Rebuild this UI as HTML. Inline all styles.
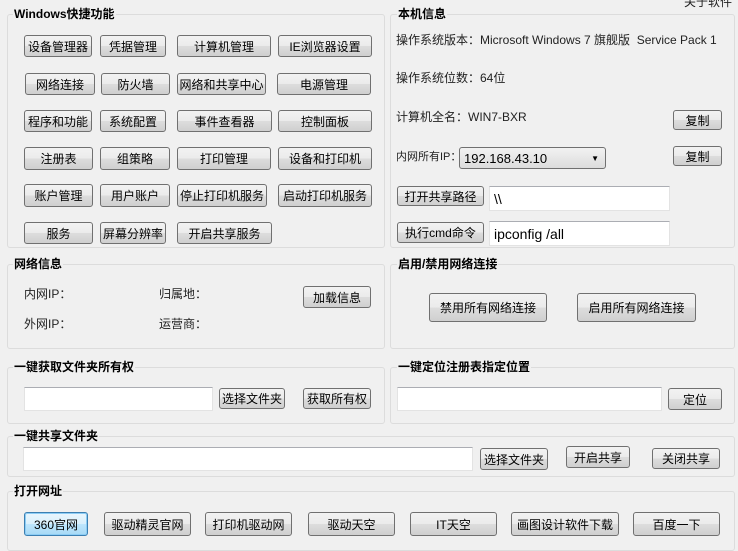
<!DOCTYPE html>
<html><head><meta charset="utf-8"><style>
*{box-sizing:border-box;margin:0;padding:0}
body{width:738px;height:547px;background:#f0f0f0;position:relative;overflow:hidden;font-family:"Liberation Sans","Noto Sans CJK SC",sans-serif;font-size:12px;color:#000}
.g{position:absolute;border:1px solid #dcdcdc;border-radius:3px;background:#f0f0f0}
.t{position:absolute;font-weight:bold;font-size:12px;background:#f0f0f0;padding:0 1px;line-height:14px}
.b{position:absolute;border:1px solid #707070;border-radius:3px;background:linear-gradient(#f2f2f2 0%,#ebebeb 50%,#dddddd 51%,#cfcfcf 100%);text-align:center;font-size:12px;display:flex;align-items:center;justify-content:center;white-space:nowrap}
.f{border-color:#3c7fb1;background:linear-gradient(#eaf6fd 0%,#d9f0fc 50%,#bee6fd 51%,#a7d9f5 100%);box-shadow:inset 0 0 0 1px #8ccdf5}
.i{position:absolute;background:#fff;border:1px solid #e3e3e3;border-top-color:#abadb3;font-size:14px;padding-left:4px;display:flex;align-items:center}
.l{position:absolute;font-size:12px;line-height:14px;white-space:nowrap;color:#222}
</style></head><body>
<div class="l" style="left:684px;top:-5px">关于软件</div>

<div class="g" style="left:7px;top:14px;width:378px;height:234px"></div>
<div class="t" style="left:13px;top:7px">Windows快捷功能</div>
<div class="b" style="left:24px;top:35px;width:68px;height:22px">设备管理器</div>
<div class="b" style="left:100px;top:35px;width:66px;height:22px">凭据管理</div>
<div class="b" style="left:177px;top:35px;width:94px;height:22px">计算机管理</div>
<div class="b" style="left:278px;top:35px;width:94px;height:22px">IE浏览器设置</div>
<div class="b" style="left:25px;top:73px;width:70px;height:22px">网络连接</div>
<div class="b" style="left:101px;top:73px;width:69px;height:22px">防火墙</div>
<div class="b" style="left:177px;top:73px;width:89px;height:22px">网络和共享中心</div>
<div class="b" style="left:277px;top:73px;width:94px;height:22px">电源管理</div>
<div class="b" style="left:24px;top:110px;width:68px;height:22px">程序和功能</div>
<div class="b" style="left:100px;top:110px;width:66px;height:22px">系统配置</div>
<div class="b" style="left:177px;top:110px;width:95px;height:22px">事件查看器</div>
<div class="b" style="left:278px;top:110px;width:94px;height:22px">控制面板</div>
<div class="b" style="left:24px;top:147px;width:69px;height:23px">注册表</div>
<div class="b" style="left:100px;top:147px;width:70px;height:23px">组策略</div>
<div class="b" style="left:177px;top:147px;width:94px;height:23px">打印管理</div>
<div class="b" style="left:278px;top:147px;width:94px;height:23px">设备和打印机</div>
<div class="b" style="left:24px;top:184px;width:69px;height:23px">账户管理</div>
<div class="b" style="left:100px;top:184px;width:70px;height:23px">用户账户</div>
<div class="b" style="left:177px;top:184px;width:90px;height:23px">停止打印机服务</div>
<div class="b" style="left:278px;top:184px;width:94px;height:23px">启动打印机服务</div>
<div class="b" style="left:24px;top:222px;width:69px;height:22px">服务</div>
<div class="b" style="left:100px;top:222px;width:66px;height:22px">屏幕分辨率</div>
<div class="b" style="left:177px;top:222px;width:95px;height:22px">开启共享服务</div>

<div class="g" style="left:390px;top:14px;width:345px;height:234px"></div>
<div class="t" style="left:397px;top:7px">本机信息</div>
<div class="l" style="left:396px;top:33px">操作系统版本：Microsoft Windows 7 旗舰版&nbsp; Service Pack 1</div>
<div class="l" style="left:396px;top:71px">操作系统位数：64位</div>
<div class="l" style="left:396px;top:110px">计算机全名：WIN7-BXR</div>
<div class="b" style="left:673px;top:110px;width:49px;height:20px">复制</div>
<div class="l" style="left:396px;top:150px;font-size:11px">内网所有IP：</div>
<div class="b" style="left:459px;top:147px;width:147px;height:22px;justify-content:space-between;padding:0 6px 0 4px;font-size:13px;background:linear-gradient(#f2f2f2,#dcdcdc)"><span>192.168.43.10</span><span style="font-size:8px">▼</span></div>
<div class="b" style="left:673px;top:146px;width:49px;height:20px">复制</div>
<div class="b" style="left:397px;top:186px;width:87px;height:20px">打开共享路径</div>
<div class="i" style="left:489px;top:186px;width:181px;height:25px">\\</div>
<div class="b" style="left:397px;top:222px;width:87px;height:21px">执行cmd命令</div>
<div class="i" style="left:489px;top:221px;width:181px;height:25px">ipconfig /all</div>

<div class="g" style="left:7px;top:264px;width:378px;height:85px"></div>
<div class="t" style="left:13px;top:257px">网络信息</div>
<div class="l" style="left:24px;top:287px">内网IP：</div>
<div class="l" style="left:159px;top:287px">归属地：</div>
<div class="b" style="left:303px;top:286px;width:68px;height:22px">加载信息</div>
<div class="l" style="left:24px;top:317px">外网IP：</div>
<div class="l" style="left:159px;top:317px">运营商：</div>

<div class="g" style="left:390px;top:264px;width:345px;height:85px"></div>
<div class="t" style="left:397px;top:257px">启用/禁用网络连接</div>
<div class="b" style="left:429px;top:293px;width:118px;height:29px">禁用所有网络连接</div>
<div class="b" style="left:577px;top:293px;width:119px;height:29px">启用所有网络连接</div>

<div class="g" style="left:7px;top:367px;width:378px;height:57px"></div>
<div class="t" style="left:13px;top:360px">一键获取文件夹所有权</div>
<div class="i" style="left:24px;top:387px;width:189px;height:24px"></div>
<div class="b" style="left:219px;top:388px;width:66px;height:21px">选择文件夹</div>
<div class="b" style="left:303px;top:388px;width:68px;height:21px">获取所有权</div>

<div class="g" style="left:390px;top:367px;width:345px;height:57px"></div>
<div class="t" style="left:397px;top:360px">一键定位注册表指定位置</div>
<div class="i" style="left:397px;top:387px;width:265px;height:24px"></div>
<div class="b" style="left:668px;top:388px;width:54px;height:22px">定位</div>

<div class="g" style="left:7px;top:436px;width:728px;height:41px"></div>
<div class="t" style="left:13px;top:429px">一键共享文件夹</div>
<div class="i" style="left:23px;top:447px;width:450px;height:24px"></div>
<div class="b" style="left:480px;top:448px;width:68px;height:22px">选择文件夹</div>
<div class="b" style="left:566px;top:446px;width:64px;height:22px">开启共享</div>
<div class="b" style="left:652px;top:448px;width:68px;height:21px">关闭共享</div>

<div class="g" style="left:7px;top:491px;width:728px;height:60px"></div>
<div class="t" style="left:13px;top:484px">打开网址</div>
<div class="b f" style="left:24px;top:512px;width:64px;height:24px">360官网</div>
<div class="b" style="left:104px;top:512px;width:87px;height:24px">驱动精灵官网</div>
<div class="b" style="left:205px;top:512px;width:87px;height:24px">打印机驱动网</div>
<div class="b" style="left:308px;top:512px;width:87px;height:24px">驱动天空</div>
<div class="b" style="left:410px;top:512px;width:87px;height:24px">IT天空</div>
<div class="b" style="left:511px;top:512px;width:108px;height:24px">画图设计软件下载</div>
<div class="b" style="left:633px;top:512px;width:87px;height:24px">百度一下</div>
</body></html>
